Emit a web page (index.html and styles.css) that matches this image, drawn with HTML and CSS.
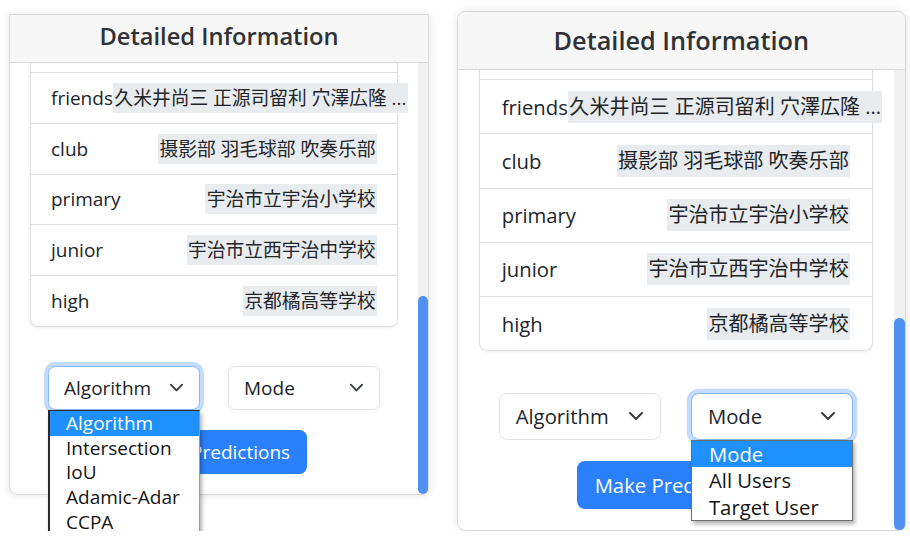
FILE: index.html
```html
<!DOCTYPE html>
<html lang="ja">
<head>
<meta charset="utf-8">
<title>Detailed Information</title>
<link rel="stylesheet" href="styles.css">
</head>
<body>
<div class="stage">
  <section class="panel panel-a">
    <header class="card-header"><h2 class="title">Detailed Information</h2></header>
    <div class="card-body">
      <div class="content">
        <ul class="list">
          <li class="item item-partial"></li>
          <li class="item"><span class="key">friends</span><span class="val">久米井尚三 正源司留利 穴澤広隆 ...</span></li>
          <li class="item"><span class="key">club</span><span class="val">摄影部 羽毛球部 吹奏乐部</span></li>
          <li class="item"><span class="key">primary</span><span class="val">宇治市立宇治小学校</span></li>
          <li class="item"><span class="key">junior</span><span class="val">宇治市立西宇治中学校</span></li>
          <li class="item"><span class="key">high</span><span class="val">京都橘高等学校</span></li>
        </ul>
        <div class="controls">
          <div class="select-wrap">
            <div class="select is-focused"><span>Algorithm</span><svg class="chev" viewBox="0 0 16 16"><path d="M2 5l6 6 6-6"/></svg></div>
            <ul class="popup popup-dark">
              <li class="is-hl">Algorithm</li>
              <li>Intersection</li>
              <li>IoU</li>
              <li>Adamic-Adar</li>
              <li>CCPA</li>
            </ul>
          </div>
          <div class="select-wrap">
            <div class="select"><span>Mode</span><svg class="chev" viewBox="0 0 16 16"><path d="M2 5l6 6 6-6"/></svg></div>
          </div>
        </div>
        <div class="actions"><button class="btn" type="button">Make Predictions</button></div>
      </div>
      <div class="scrollbar"><div class="thumb"></div></div>
    </div>
  </section>

  <section class="panel panel-b">
    <header class="card-header"><h2 class="title">Detailed Information</h2></header>
    <div class="card-body">
      <div class="content">
        <ul class="list">
          <li class="item item-partial"></li>
          <li class="item"><span class="key">friends</span><span class="val">久米井尚三 正源司留利 穴澤広隆 ...</span></li>
          <li class="item"><span class="key">club</span><span class="val">摄影部 羽毛球部 吹奏乐部</span></li>
          <li class="item"><span class="key">primary</span><span class="val">宇治市立宇治小学校</span></li>
          <li class="item"><span class="key">junior</span><span class="val">宇治市立西宇治中学校</span></li>
          <li class="item"><span class="key">high</span><span class="val">京都橘高等学校</span></li>
        </ul>
        <div class="controls">
          <div class="select-wrap">
            <div class="select"><span>Algorithm</span><svg class="chev" viewBox="0 0 16 16"><path d="M2 5l6 6 6-6"/></svg></div>
          </div>
          <div class="select-wrap">
            <div class="select is-focused"><span>Mode</span><svg class="chev" viewBox="0 0 16 16"><path d="M2 5l6 6 6-6"/></svg></div>
            <ul class="popup">
              <li class="is-hl">Mode</li>
              <li>All Users</li>
              <li>Target User</li>
            </ul>
          </div>
        </div>
        <div class="actions"><button class="btn" type="button">Make Predictions</button></div>
      </div>
      <div class="scrollbar"><div class="thumb"></div></div>
    </div>
  </section>
</div>
</body>
</html>
```
FILE: styles.css
```css
* { box-sizing: border-box; }

html, body {
  margin: 0;
  padding: 0;
  background: #ffffff;
}

body {
  font-family: "Open Sans", "Noto Sans CJK SC", sans-serif;
  color: #212529;
}

.stage {
  display: flex;
  align-items: flex-start;
  padding-left: 9px;
}

.panel {
  --u: 20px;
  width: calc(var(--u) * 21);
  font-size: calc(var(--u) * 0.95);
  background: #ffffff;
  border: 1px solid #d9d9d9;
  border-radius: calc(var(--u) * 0.4);
  box-shadow: 0 0 9px rgba(0, 0, 0, 0.11);
}

.panel-a {
  margin-top: 14px;
  border-top-left-radius: 0;
  border-top-right-radius: 0;
}

.panel-b {
  --u: 21.36px;
  margin-top: 11px;
  margin-left: 28px;
}

.card-header {
  background: #f7f7f7;
  border-bottom: 1px solid #d9d9d9;
  padding: calc(var(--u) * 0.575) 0;
  text-align: center;
  border-radius: calc(var(--u) * 0.4) calc(var(--u) * 0.4) 0 0;
}

.panel-a .card-header {
  padding-top: calc(var(--u) * 0.275);
  border-radius: 0;
}

.title {
  margin: 0;
  font-size: calc(var(--u) * 1.185);
  line-height: calc(var(--u) * 1.5);
  font-weight: 600;
  color: #2f3337;
}

.card-body {
  display: flex;
}

.content {
  flex: 1;
  min-width: 0;
  padding: 0 var(--u) var(--u);
}

.scrollbar {
  width: calc(var(--u) * 0.5);
  background: #f1f1f1;
  display: flex;
  flex-direction: column;
  justify-content: flex-end;
  border-bottom-right-radius: calc(var(--u) * 0.4);
}

.thumb {
  height: calc(var(--u) * 9.9);
  background: #5090f1;
  border-radius: calc(var(--u) * 0.25);
}

.list {
  list-style: none;
  margin: 0;
  padding: 0;
  border: 1px solid #dfdfdf;
  border-top: 0;
  border-radius: 0 0 calc(var(--u) * 0.375) calc(var(--u) * 0.375);
  box-shadow: 0 1px 3px rgba(0, 0, 0, 0.07);
}

.item {
  display: flex;
  justify-content: space-between;
  align-items: center;
  padding: calc(var(--u) * 0.495) var(--u);
  line-height: calc(var(--u) * 1.5);
  border-bottom: 1px solid #dfdfdf;
  white-space: nowrap;
}

.item:last-child {
  border-bottom: 0;
}

.item-partial {
  height: calc(var(--u) * 0.5);
  padding: 0;
}

.key {
  flex-shrink: 0;
}

.val {
  flex-shrink: 0;
  display: inline-block;
  font-size: calc(var(--u) * 0.9375);
  line-height: calc(var(--u) * 1.4);
  padding: 1px 1.5px;
  background: #e9ecef;
}

.controls {
  display: flex;
  justify-content: center;
  gap: calc(var(--u) * 1.4);
  margin-top: calc(var(--u) * 1.95);
}

.select-wrap {
  position: relative;
  width: calc(var(--u) * 7.6);
}

.select {
  height: calc(var(--u) * 2.2);
  display: flex;
  align-items: center;
  justify-content: space-between;
  padding: 0 calc(var(--u) * 0.75);
  background: #ffffff;
  border: 1px solid #dee2e6;
  border-radius: calc(var(--u) * 0.375);
  color: #212529;
}

.select.is-focused {
  border-color: #86b7fe;
  box-shadow: 0 0 0 calc(var(--u) * 0.2) rgba(13, 110, 253, 0.25);
}

.chev {
  width: calc(var(--u) * 0.75);
  height: calc(var(--u) * 0.75);
  fill: none;
  stroke: #343a40;
  stroke-width: 2;
  stroke-linecap: round;
  stroke-linejoin: round;
}

.popup {
  position: absolute;
  top: 100%;
  left: 0;
  right: 0;
  z-index: 2;
  list-style: none;
  margin: 0;
  padding: 0;
  background: #ffffff;
  border: 1px solid #6f6f6f;
  box-shadow: 2px 3px 4px rgba(0, 0, 0, 0.3);
  color: #141414;
}

.popup-dark {
  border-color: #2a2a2a #9a9a9a #9a9a9a #2a2a2a;
  border-left-width: 2px;
}

.popup li {
  height: calc(var(--u) * 1.235);
  line-height: calc(var(--u) * 1.235);
  padding-left: calc(var(--u) * 0.8);
  white-space: nowrap;
}

.popup .is-hl {
  background: #1e90ff;
  color: #ffffff;
}

.actions {
  display: flex;
  justify-content: center;
  margin-top: var(--u);
}

.btn {
  width: calc(var(--u) * 9.3);
  height: calc(var(--u) * 2.22);
  padding: 0;
  border: 0;
  border-radius: calc(var(--u) * 0.375);
  background: #2a7ffd;
  color: #ffffff;
  font-family: inherit;
  font-size: inherit;
}
```
